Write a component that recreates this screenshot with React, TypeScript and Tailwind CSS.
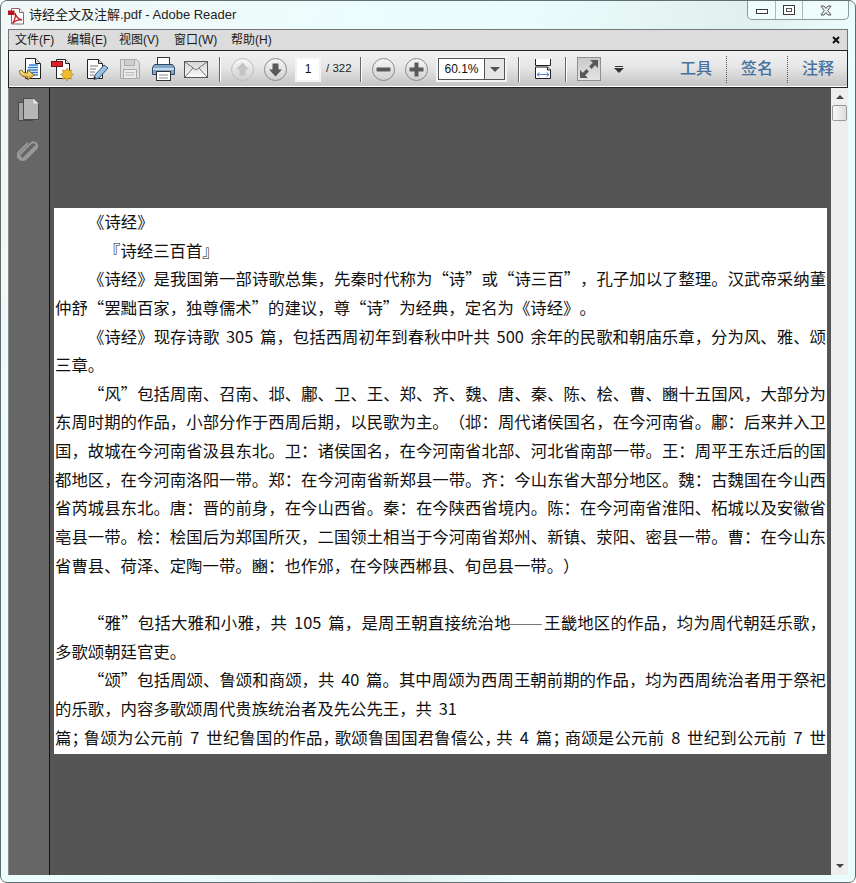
import React from "react";

const CJK = "font-['Liberation_Sans','Noto_Sans_CJK_SC',sans-serif]";

type L = { t: string; i?: number; j?: boolean; tight?: boolean };
const lines: L[] = [
  { t: "《诗经》", i: 33 },
  { t: "『诗经三百首』", i: 49 },
  { t: "《诗经》是我国第一部诗歌总集，先秦时代称为“诗”或“诗三百”，孔子加以了整理。汉武帝采纳董", i: 33, j: true },
  { t: "仲舒“罢黜百家，独尊儒术”的建议，尊“诗”为经典，定名为《诗经》。" },
  { t: "《诗经》现存诗歌 305 篇，包括西周初年到春秋中叶共 500 余年的民歌和朝庙乐章，分为风、雅、颂", i: 33, j: true },
  { t: "三章。" },
  { t: "“风”包括周南、召南、邶、鄘、卫、王、郑、齐、魏、唐、秦、陈、桧、曹、豳十五国风，大部分为", i: 33, j: true },
  { t: "东周时期的作品，小部分作于西周后期，以民歌为主。（邶：周代诸侯国名，在今河南省。鄘：后来并入卫", j: true },
  { t: "国，故城在今河南省汲县东北。卫：诸侯国名，在今河南省北部、河北省南部一带。王：周平王东迁后的国", j: true },
  { t: "都地区，在今河南洛阳一带。郑：在今河南省新郑县一带。齐：今山东省大部分地区。魏：古魏国在今山西", j: true },
  { t: "省芮城县东北。唐：晋的前身，在今山西省。秦：在今陕西省境内。陈：在今河南省淮阳、柘城以及安徽省", j: true },
  { t: "亳县一带。桧：桧国后为郑国所灭，二国领土相当于今河南省郑州、新镇、荥阳、密县一带。曹：在今山东", j: true },
  { t: "省曹县、荷泽、定陶一带。豳：也作邠，在今陕西郴县、旬邑县一带。）" },
  { t: "\u00a0" },
  { t: "“雅”包括大雅和小雅，共 105 篇，是周王朝直接统治地——王畿地区的作品，均为周代朝廷乐歌，", i: 33, j: true },
  { t: "多歌颂朝廷官吏。" },
  { t: "“颂”包括周颂、鲁颂和商颂，共 40 篇。其中周颂为西周王朝前期的作品，均为西周统治者用于祭祀", i: 33, j: true },
  { t: "的乐歌，内容多歌颂周代贵族统治者及先公先王，共 31" },
  { t: "篇；鲁颂为公元前 7 世纪鲁国的作品，歌颂鲁国国君鲁僖公，共 4 篇；商颂是公元前 8 世纪到公元前 7 世", j: true, tight: true },
];

function Line({ l }: { l: L }) {
  const parts = l.t.split(l.tight ? /(；|，)/ : /(“|”|——)/);
  return (
    <>
      {parts.map((p, k) => {
        if (p === "“" || p === "”")
          return <span key={k} className="inline-block w-[16.4px] text-center">{p}</span>;
        if (p === "——")
          return <span key={k} className="inline-block w-[33px] scale-x-[1.37] text-center text-[#777]">{p}</span>;
        if (p === "；" || p === "，")
          return <span key={k} className="tracking-[3.8px] [font-feature-settings:'halt']">{p}</span>;
        return <span key={k}>{p}</span>;
      })}
    </>
  );
}

function Sep() {
  return <div className="h-[25px] w-[2px] shrink-0 bg-[linear-gradient(90deg,#666_50%,#fff_50%)]" />;
}

function Dotted() {
  return <div className="h-[27px] w-0 shrink-0 border-l border-dotted border-[#555]" />;
}

function PdfLogo() {
  return (
    <svg width="18" height="18" viewBox="0 0 18 18" className="shrink-0">
      <path d="M3.5 1.5h8l4 4v11.500h-12z" fill="#fff" stroke="#8a6a6a" />
      <path d="M11.500 1.500v4h4" fill="#eee" stroke="#8a6a6a" />
      <path d="M0 3.500h6.500v4.500H0z" fill="#b5161c" />
      <path d="M7 6c1 4 3 6 7 7-4-.5-7 .5-9.500 3.500C7 13 8 10 7 6z" fill="none" stroke="#c01a1f" strokeWidth="1.300" />
    </svg>
  );
}

function OpenIcon() {
  return (
    <svg width="26" height="24" viewBox="0 0 26 24">
      <defs>
        <linearGradient id="org" x1="0" y1="0" x2="0" y2="1">
          <stop offset="0" stopColor="#fff3b0" />
          <stop offset="1" stopColor="#d99a1e" />
        </linearGradient>
      </defs>
      <path d="M7.500 1.500h10l5 5v15h-15z" fill="#fff" stroke="#222" />
      <path d="M17.500 1.500v5h5" fill="#ddd" stroke="#222" />
      <path d="M11 8h9M10 10.500h10M10 13h10M11 15.500h9M12 18h8" stroke="#2f7fd8" strokeWidth="1.300" />
      <path d="M1.500 14c0 4 3 6 8 6v3l7-5-7-5v3c-3 0-5-.5-6-3z" fill="url(#org)" stroke="#8a6212" />
    </svg>
  );
}

function CreateIcon() {
  return (
    <svg width="24" height="24" viewBox="0 0 24 24">
      <path d="M5.500 2.500h9l4 4v15h-13z" fill="#fff" stroke="#222" />
      <path d="M14.500 2.500v4h4" fill="#ddd" stroke="#222" />
      <rect x="0.500" y="4.500" width="11" height="5" fill="#d8232a" stroke="#7a1015" />
      <path d="M16 11l1.500 2.800 3-.8-.8 3 2.800 1.500-2.800 1.500.8 3-3-.8L16 24l-1.500-2.800-3 .8.800-3L9.500 17.500l2.800-1.500-.8-3 3 .8z" fill="#f2bd2c" stroke="#a9781a" strokeWidth=".6" />
    </svg>
  );
}

function EditIcon() {
  return (
    <svg width="23" height="22" viewBox="0 0 23 22">
      <path d="M1.500 1.500h11l4 4v15h-15z" fill="#fff" stroke="#222" />
      <path d="M12.500 1.500v4h4" fill="#ddd" stroke="#222" />
      <path d="M4 8h8M4 11h6M4 14h5M4 17h4" stroke="#777" />
      <path d="M9 17l9-10 4 3-9 10-5 1.500z" fill="#9cc0e0" stroke="#33526e" />
      <path d="M8 18l-.6 3 3-.8z" fill="#222" />
    </svg>
  );
}

function SaveIcon() {
  return (
    <svg width="20" height="20" viewBox="0 0 20 20">
      <path d="M.5.5h16l3 3v16H.5z" fill="#dedede" stroke="#aaa" />
      <rect x="4.500" y=".5" width="10" height="6" fill="#cfcfcf" stroke="#aaa" />
      <rect x="3.500" y="10.500" width="13" height="9" fill="#ececec" stroke="#aaa" />
      <path d="M5.500 13.500h9M5.500 16h9" stroke="#bbb" />
    </svg>
  );
}

function PrintIcon() {
  return (
    <svg width="23" height="24" viewBox="0 0 23 24">
      <rect x="5.500" y="0.500" width="12" height="9" fill="#fff" stroke="#333" />
      <path d="M2.500 7.500h18l2 3v7h-22v-7z" fill="#7fa6cc" stroke="#33475e" />
      <path d="M1 12h21" stroke="#c4dbee" strokeWidth="2" />
      <rect x="4.500" y="14.500" width="14" height="9" fill="#fff" stroke="#333" />
      <path d="M7 18h9M7 21h9" stroke="#888" />
    </svg>
  );
}

function MailIcon() {
  return (
    <svg width="24" height="17" viewBox="0 0 24 17">
      <defs>
        <linearGradient id="ml" x1="0" y1="0" x2="0" y2="1">
          <stop offset="0" stopColor="#d4d4d4" />
          <stop offset="1" stopColor="#fbfbfb" />
        </linearGradient>
      </defs>
      <rect x=".5" y=".5" width="23" height="16" fill="url(#ml)" stroke="#555" />
      <path d="M1 1l11 8L23 1M1 16l8-9M23 16l-8-9" fill="none" stroke="#777" />
    </svg>
  );
}

function RoundBtn({ kind, dim }: { kind: "up" | "down" | "minus" | "plus"; dim?: boolean }) {
  const c = dim ? "#c4c4c4" : "#5a5a5a";
  return (
    <svg width="23" height="23" viewBox="0 0 23 23">
      <defs>
        <linearGradient id={`rb${kind}`} x1="0" y1="0" x2="0" y2="1">
          <stop offset="0" stopColor="#f8f8f8" />
          <stop offset="1" stopColor="#cfcfcf" />
        </linearGradient>
      </defs>
      <circle cx="11.500" cy="11.500" r="11" fill={`url(#rb${kind})`} stroke={dim ? "#bcbcbc" : "#8a8a8a"} />
      {kind === "up" && <path d="M11.500 4.500l6.500 7h-3.500v6h-6v-6H5z" fill={c} />}
      {kind === "down" && <path d="M11.500 18.500l6.500-7h-3.500v-6h-6v6H5z" fill={c} />}
      {kind === "minus" && <rect x="4.500" y="9.500" width="14" height="4" rx="1" fill={c} />}
      {kind === "plus" && <path d="M9.500 4.500h4v5h5v4h-5v5h-4v-5h-5v-4h5z" fill={c} />}
    </svg>
  );
}

function FitWidthIcon() {
  return (
    <svg width="17" height="20" viewBox="0 0 17 20">
      <path d="M.5 0v6.500h15V0" fill="#fff" stroke="#222" />
      <path d="M.5 19.500v-11.500h12l3 3v8.500z" fill="#fff" stroke="#222" />
      <path d="M12.500 8v3h3" fill="#ddd" stroke="#222" />
      <path d="M2 15.500h12M2 15.500l2.500-2M2 15.500l2.500 2M14 15.500l-2.500-2M14 15.500l-2.500 2" stroke="#5d80c0" fill="none" />
    </svg>
  );
}

function FullIcon() {
  return (
    <svg width="24" height="24" viewBox="0 0 24 24">
      <defs>
        <linearGradient id="fs" x1="0" y1="0" x2="0" y2="1">
          <stop offset="0" stopColor="#c9c9c9" />
          <stop offset="1" stopColor="#e4e4e4" />
        </linearGradient>
      </defs>
      <rect x=".5" y=".5" width="23" height="23" fill="url(#fs)" stroke="#8f8f8f" />
      <path d="M21 3v8l-2.800-2.800-3.700 3.700-2.400-2.400 3.700-3.700L13 3z" fill="#585858" />
      <path d="M3 21v-8l2.800 2.800 3.700-3.700 2.400 2.400-3.700 3.700L11 21z" fill="#585858" />
    </svg>
  );
}

function Pages() {
  return (
    <svg width="21" height="23" viewBox="0 0 21 23">
      <rect x=".5" y="4.500" width="14" height="18" fill="#a4a4a4" stroke="#4a4a4a" />
      <path d="M5.500.5h10l5 5v16h-15z" fill="#b6b6b6" stroke="#4a4a4a" />
      <path d="M15.500.5v5h5" fill="#e8e8e8" />
    </svg>
  );
}

function Clip() {
  return (
    <svg width="22" height="23" viewBox="0 0 23 24" fill="none">
      <path d="M20 6L7.500 18.500a2.800 2.800 0 0 1-4-4L15 3a4 4 0 0 1 5.500 5.500L9 20a5 5 0 0 1-7-1 5 5 0 0 1 0-6.500L11 3.500" stroke="#9a9a9a" strokeWidth="2" strokeLinecap="round" />
    </svg>
  );
}

function Triangle({ dark }: { dark?: boolean }) {
  return <div className={`h-0 w-0 border-x-[5px] border-t-[5px] border-x-transparent ${dark ? "border-t-[#333]" : "border-t-[#555]"}`} />;
}

export default function App() {
  return (
    <div className={`${CJK} flex h-[883px] w-[856px] flex-col overflow-hidden rounded-t-[7px] rounded-b-[7px] border border-[#5f6f70] bg-[linear-gradient(112deg,#f2f6f6_0%,#ecfdfd_30%,#e9fbfb_45%,#e0f0ee_62%,#ebfdfd_72%,#eafcfc_100%)] px-[7px] pb-[7px]`}>
      <div className="flex h-[28px] shrink-0 items-start">
        <div className="mt-[6px]"><PdfLogo /></div>
        <span className="ml-[3px] mt-[5px] text-[13px] leading-[18px] text-[#222]">诗经全文及注解.pdf - Adobe Reader</span>
        <div className="ml-auto mr-[-1px] flex h-[19px] w-[102px] rounded-b-[5px] border border-t-0 border-[#8a9c9d] bg-[#eefcfc]">
          <div className="flex w-[28px] items-center justify-center border-r border-[#a8baba]">
            <div className="mt-[2px] h-[5px] w-[12px] border border-[#3a3a3a] bg-white" />
          </div>
          <div className="flex w-[27px] items-center justify-center border-r border-[#a8baba]">
            <div className="flex h-[10px] w-[12px] items-center justify-center border border-[#3a3a3a] bg-white">
              <div className="h-[4px] w-[6px] border border-[#555]" />
            </div>
          </div>
          <div className="flex flex-1 items-center justify-center">
            <svg width="12" height="11" viewBox="0 0 12 11">
              <path d="M1 1h3l2 2.500L8 1h3L7.700 5.500 11 10H8L6 7.500 4 10H1l3.300-4.500z" fill="#f4f8f8" stroke="#444" strokeWidth=".9" />
            </svg>
          </div>
        </div>
      </div>

      <div className="flex h-[21px] shrink-0 items-center border-x border-t border-[#777] bg-[#dcdcdc] text-[12px] text-[#1a1a1a]">
        <span className="ml-[6px] w-[52px]">文件(F)</span>
        <span className="w-[52px]">编辑(E)</span>
        <span className="w-[55px]">视图(V)</span>
        <span className="w-[57px]">窗口(W)</span>
        <span>帮助(H)</span>
        <svg width="8" height="8" viewBox="0 0 8 8" className="ml-auto mr-[7px]">
          <path d="M1 1l6 6M7 1L1 7" stroke="#111" strokeWidth="2" />
        </svg>
      </div>

      <div className="flex h-[38px] shrink-0 items-center border border-[#222] bg-[linear-gradient(#f1f1f1,#e6e6e6_45%,#c2c2c2)] shadow-[inset_0_-1px_0_#fff]">
        <div className="ml-[9px]"><OpenIcon /></div>
        <div className="ml-[7px]"><CreateIcon /></div>
        <div className="ml-[11px]"><EditIcon /></div>
        <div className="ml-[11px]"><SaveIcon /></div>
        <div className="ml-[12px]"><PrintIcon /></div>
        <div className="ml-[9px]"><MailIcon /></div>
        <div className="ml-[11px]"><Sep /></div>
        <div className="ml-[10px]"><RoundBtn kind="up" dim /></div>
        <div className="ml-[10px]"><RoundBtn kind="down" /></div>
        <div className="ml-[8px] flex h-[25px] w-[26px] items-center justify-center border-2 border-[#f4f4f4] bg-white text-[12px] text-[#111]">1</div>
        <span className="ml-[5px] w-[28px] whitespace-nowrap text-[11.5px] text-[#222]">/ 322</span>
        <div className="ml-[6px]"><Sep /></div>
        <div className="ml-[10px]"><RoundBtn kind="minus" /></div>
        <div className="ml-[10px]"><RoundBtn kind="plus" /></div>
        <div className="ml-[8px] flex h-[26px] w-[71px] border-2 border-[#f4f4f4]">
          <div className="flex w-[46px] items-center justify-center border border-r-0 border-[#555] bg-white text-[12px] text-[#111]">60.1%</div>
          <div className="flex flex-1 items-center justify-center border border-[#555] bg-[#e6e6e6]"><Triangle /></div>
        </div>
        <div className="ml-[11px]"><Sep /></div>
        <div className="ml-[15px]"><FitWidthIcon /></div>
        <div className="ml-[13px]"><Sep /></div>
        <div className="ml-[10px]"><FullIcon /></div>
        <div className="ml-[13px] flex flex-col items-center gap-[1px]">
          <div className="h-[1px] w-[8px] bg-[#333]" />
          <Triangle dark />
        </div>
        <span className="ml-[56px] w-[32px] whitespace-nowrap text-[16px] font-medium text-[#46709e]">工具</span>
        <div className="ml-[14px]"><Dotted /></div>
        <span className="ml-[14px] w-[32px] whitespace-nowrap text-[16px] font-medium text-[#46709e]">签名</span>
        <div className="ml-[14px]"><Dotted /></div>
        <span className="ml-[14px] w-[32px] whitespace-nowrap text-[16px] font-medium text-[#46709e]">注释</span>
      </div>

      <div className="flex min-h-0 flex-1 border-l border-[#888]">
        <div className="flex w-[41px] shrink-0 flex-col items-center border-r border-[#111] bg-[#666] pr-[2px] pt-[10px]">
          <Pages />
          <div className="mt-[19px]"><Clip /></div>
        </div>
        <div className="flex flex-1 flex-col bg-[#555] pl-[4px] pr-[4px] pt-[120px]">
          <div className="h-[546px] overflow-hidden bg-white px-[1px] text-[16.4px] text-[#111] [text-spacing-trim:space-all] [word-spacing:3px] font-['Noto_Sans_CJK_SC','Liberation_Sans',sans-serif]">
            <div className="-translate-y-px">
              {lines.map((l, k) => (
                <div
                  key={k}
                  style={{ paddingLeft: l.i ?? 0 }}
                  className={`h-[28.650px] overflow-hidden whitespace-pre-wrap leading-[28.650px] ${l.j ? "[text-align-last:justify] [text-align:justify]" : ""}`}
                >
                  <Line l={l} />
                </div>
              ))}
            </div>
          </div>
        </div>
        <div className="flex w-[17px] shrink-0 flex-col items-center bg-[#eeeeee] pt-[7px]">
          <div className="h-0 w-0 border-x-[4px] border-b-[4px] border-x-transparent border-b-[#444]" />
          <div className="mt-[6px] h-[16px] w-[15px] rounded-[2px] border border-[#9a9a9a] bg-[linear-gradient(90deg,#f8f8f8,#dcdcdc)]" />
          <div className="mt-auto mb-[7px] h-0 w-0 border-x-[4px] border-t-[4px] border-x-transparent border-t-[#444]" />
        </div>
      </div>
    </div>
  );
}
